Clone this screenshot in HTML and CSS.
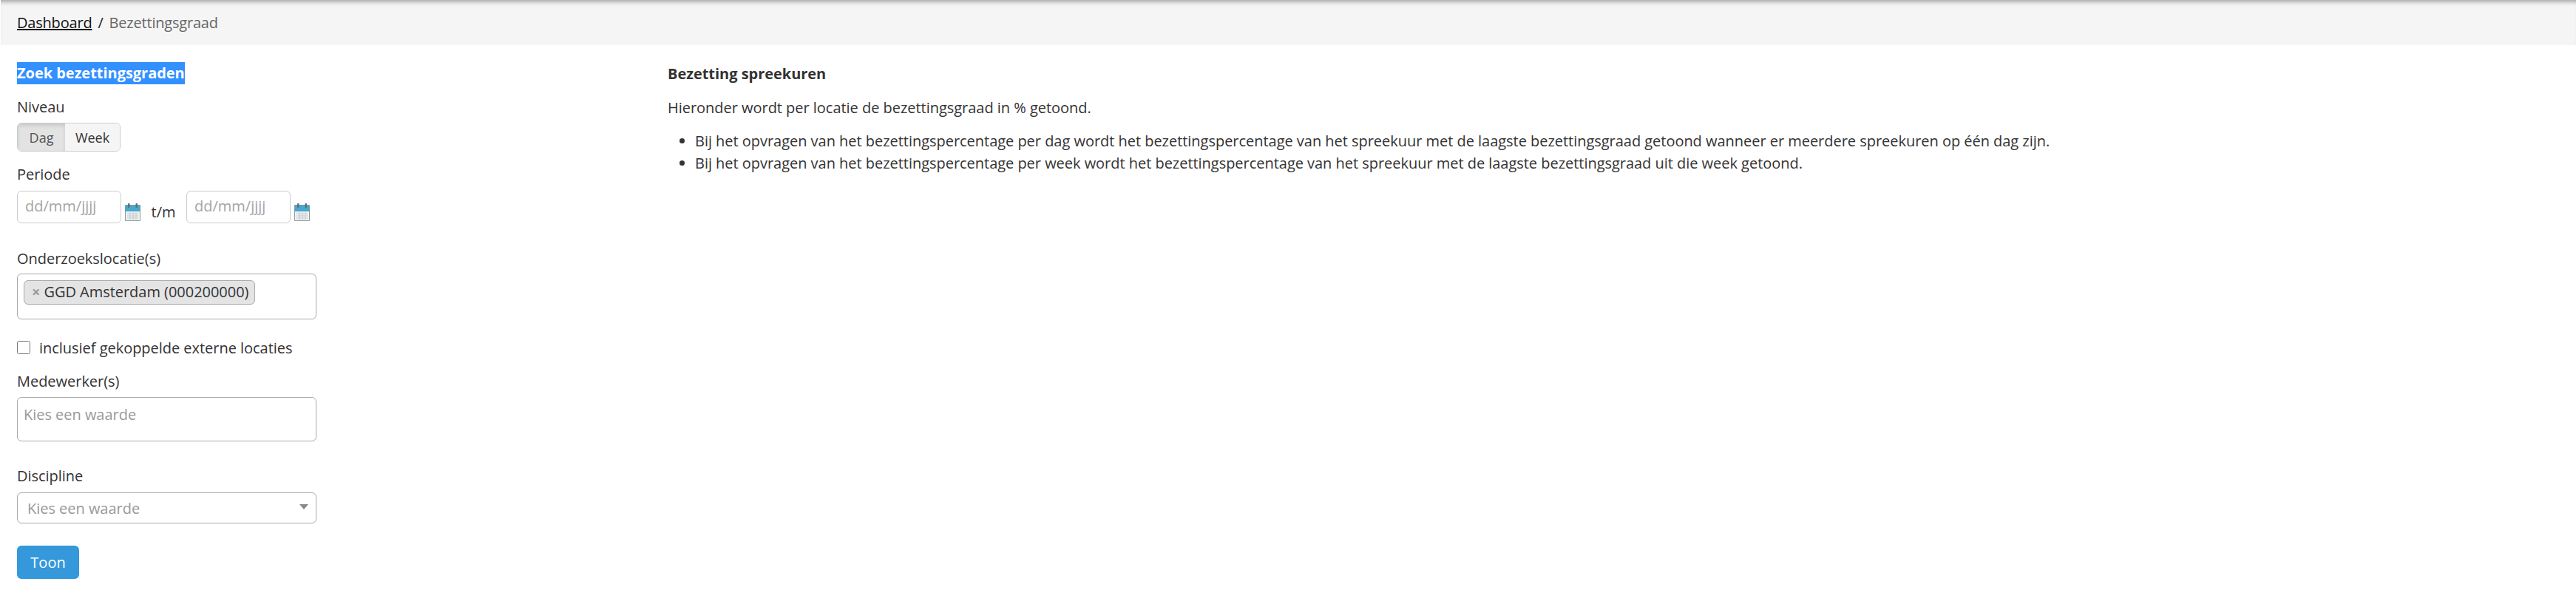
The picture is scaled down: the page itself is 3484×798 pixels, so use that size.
FILE: index.html
```html
<!DOCTYPE html>
<html lang="nl">
<head>
    <meta charset="UTF-8">
    <title>Bezettingsgraad</title>
    <link rel="stylesheet" href="styles.css">
</head>
<body>
    <nav class="breadcrumb">
        <a href="#" class="crumb-link">Dashboard</a>
        <span class="crumb-sep">/</span>
        <span class="crumb-current">Bezettingsgraad</span>
    </nav>

    <main class="content">
        <form class="filters">
            <h2 class="filters-title"><span class="selected">Zoek bezettingsgraden</span></h2>

            <div class="label label-niveau">Niveau</div>
            <div class="toggle">
                <button type="button" class="toggle-btn active">Dag</button>
                <button type="button" class="toggle-btn">Week</button>
            </div>

            <div class="label label-periode">Periode</div>
            <div class="period">
                <input type="text" class="date" placeholder="dd/mm/jjjj">
                <svg class="cal" viewBox="0 0 21 24"><use href="#calendar"/></svg>
                <span class="until">t/m</span>
                <input type="text" class="date" placeholder="dd/mm/jjjj">
                <svg class="cal" viewBox="0 0 21 24"><use href="#calendar"/></svg>
            </div>

            <div class="label label-locatie">Onderzoekslocatie(s)</div>
            <div class="multi multi-locatie">
                <span class="chip"><span class="chip-x">×</span>GGD Amsterdam (000200000)</span>
            </div>

            <label class="check">
                <input type="checkbox" class="check-box">
                <span>inclusief gekoppelde externe locaties</span>
            </label>

            <div class="label label-medewerker">Medewerker(s)</div>
            <div class="multi multi-medewerker">
                <span class="placeholder">Kies een waarde</span>
            </div>

            <div class="label label-discipline">Discipline</div>
            <div class="select">
                <span class="placeholder">Kies een waarde</span>
                <span class="select-arrow"></span>
            </div>

            <button type="button" class="submit">Toon</button>
        </form>

        <section class="info">
            <h2 class="info-title">Bezetting spreekuren</h2>
            <p class="info-text">Hieronder wordt per locatie de bezettingsgraad in % getoond.</p>
            <ul class="info-list">
                <li>Bij het opvragen van het bezettingspercentage per dag wordt het bezettingspercentage van het spreekuur met de laagste bezettingsgraad getoond wanneer er meerdere spreekuren op één dag zijn.</li>
                <li>Bij het opvragen van het bezettingspercentage per week wordt het bezettingspercentage van het spreekuur met de laagste bezettingsgraad uit die week getoond.</li>
            </ul>
        </section>
    </main>

    <svg width="0" height="0" class="defs">
        <symbol id="calendar" viewBox="0 0 21 24">
            <rect x="0" y="2" width="21" height="22" rx="1" fill="#8e9aa0"/>
            <rect x="0.5" y="2.5" width="20" height="9" fill="#4ba6cc"/>
            <rect x="1" y="11" width="19" height="12" fill="#eef1f1"/>
            <rect x="4" y="0" width="2.5" height="6" rx="1" fill="#5d6f78"/>
            <rect x="14.500" y="0" width="2.500" height="6" rx="1" fill="#5d6f78"/>
            <path d="M3 14h15M3 17h15M3 20h15M7 12.500v9.500M11 12.500v9.500M15 12.500v9.500" stroke="#c3cbce" stroke-width="1" fill="none"/>
        </symbol>
    </svg>
</body>
</html>
```

FILE: styles.css
```css
* {
    box-sizing: border-box;
}
body {
    margin: 0;
    background: #fff;
    color: #333;
    font-family: "Open Sans", "Noto Sans", sans-serif;
    font-size: 20px;
    letter-spacing: -0.03px;
}
.defs {
    display: block;
}

.breadcrumb {
    height: 61px;
    margin-left: 1px;
    padding: 16px 22px 0;
    background: #f5f5f5;
    box-shadow: inset 0 7px 6px -5px #999;
    font-size: 20px;
    line-height: 30px;
    letter-spacing: -0.2px;
    display: flex;
}
.crumb-link {
    color: #111;
}
.crumb-sep {
    margin: 0 8px;
    color: #222;
}
.crumb-current {
    color: #666;
}

.content {
    display: flex;
    padding: 0 23px;
}
.filters {
    width: 405px;
    margin-right: 475px;
    padding-top: 23px;
}
.filters-title {
    margin: 0;
    font-size: 20px;
    line-height: 30px;
    height: 30px;
}
.selected {
    display: inline-block;
    background: #3390ff;
    color: #fff;
}

.label {
    font-size: 20px;
    line-height: 28px;
}
.label-niveau {
    margin-top: 17px;
}
.label-periode {
    margin-top: 17px;
}
.label-locatie {
    margin-top: 34px;
}
.label-medewerker {
    margin-top: 17px;
}
.label-discipline {
    margin-top: 33px;
}

.toggle {
    display: flex;
    width: 140px;
    height: 39px;
    margin-top: 7px;
    border: 1px solid #ccc;
    border-radius: 6px;
    overflow: hidden;
}
.toggle-btn {
    border: none;
    padding: 0;
    width: 75px;
    background: #f5f5f5;
    color: #333;
    font: inherit;
    font-size: 18px;
}
.toggle-btn.active {
    width: 65px;
    background: #e3e3e3;
    box-shadow: inset 0 3px 5px rgba(0, 0, 0, 0.12);
    color: #555;
}

.period {
    display: flex;
    align-items: flex-start;
    margin-top: 8px;
}
.date {
    width: 141px;
    height: 44px;
    padding: 0 10px 4px;
    border: 1px solid #ccc;
    border-radius: 6px;
    font: inherit;
    font-size: 20px;
}
.date::placeholder {
    color: #a5a5a5;
}
.cal {
    width: 21px;
    height: 24px;
    margin: 17px 0 0 5px;
}
.until {
    width: 62px;
    margin-top: 14px;
    text-align: center;
    line-height: 30px;
    font-size: 20px;
}

.multi {
    margin-top: 6px;
    border: 1px solid #aaa;
    border-radius: 6px;
    padding: 8px;
}
.multi-locatie {
    height: 62px;
}
.multi-medewerker {
    height: 60px;
    margin-top: 7px;
    padding-top: 9px;
}
.chip {
    display: inline-block;
    width: 313px;
    height: 33px;
    padding-left: 10px;
    background: #e4e4e4;
    border: 1px solid #aaa;
    border-radius: 6px;
    font-size: 20px;
    line-height: 30px;
    white-space: nowrap;
}
.chip-x {
    margin-right: 5px;
    color: #999;
    font-weight: bold;
}
.placeholder {
    color: #999;
    font-size: 20px;
    line-height: 28px;
}

.check {
    display: flex;
    align-items: center;
    gap: 12px;
    height: 30px;
    margin-top: 23px;
    font-size: 20px;
}
.check-box {
    width: 18px;
    height: 18px;
    margin: 0;
}

.select {
    display: flex;
    align-items: center;
    justify-content: space-between;
    height: 42px;
    margin-top: 8px;
    padding: 2px 10px 0 13px;
    border: 1px solid #aaa;
    border-radius: 6px;
}
.select-arrow {
    width: 0;
    height: 0;
    margin-top: -5px;
    border-left: 6px solid transparent;
    border-right: 6px solid transparent;
    border-top: 7px solid #888;
}

.submit {
    display: block;
    width: 84px;
    height: 45px;
    margin-top: 30px;
    border: none;
    border-radius: 6px;
    background: #3498db;
    color: #fff;
    font: inherit;
    font-size: 20px;
}

.info {
    flex: 1;
    padding-top: 24px;
}
.info-title {
    margin: 0;
    font-size: 20px;
    line-height: 30px;
}
.info-text {
    margin: 16px 0 0;
    line-height: 30px;
}
.info-list {
    margin: 15px 0 0;
    padding-left: 37px;
    line-height: 30px;
}
```
